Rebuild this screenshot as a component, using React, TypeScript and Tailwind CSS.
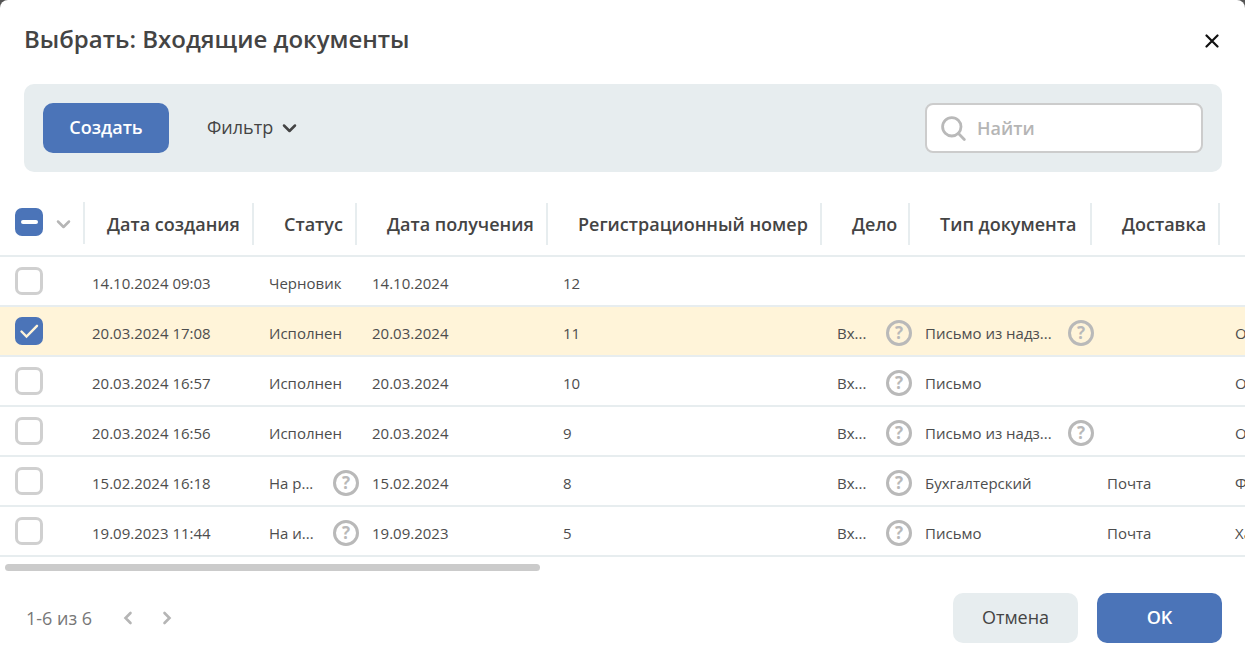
import { useEffect, useRef, useState } from "react";

type Cell = { text: string; hint?: boolean };
type Row = { id: number; cells: Cell[] };

const columns = [
  { title: "Дата создания", width: "w-[169px]" },
  { title: "Статус", width: "w-[103px]" },
  { title: "Дата получения", width: "w-[191px]" },
  { title: "Регистрационный номер", width: "w-[274px]" },
  { title: "Дело", width: "w-[88px]" },
  { title: "Тип документа", width: "w-[182px]" },
  { title: "Доставка", width: "w-[128px]" },
  { title: "", width: "" },
];

const t = (text: string): Cell => ({ text });
const h = (text: string): Cell => ({ text, hint: true });

const rows: Row[] = [
  { id: 12, cells: [t("14.10.2024 09:03"), t("Черновик"), t("14.10.2024"), t("12"), t(""), t(""), t(""), t("")] },
  { id: 11, cells: [t("20.03.2024 17:08"), t("Исполнен"), t("20.03.2024"), t("11"), h("Вх..."), h("Письмо из надз..."), t(""), t("О")] },
  { id: 10, cells: [t("20.03.2024 16:57"), t("Исполнен"), t("20.03.2024"), t("10"), h("Вх..."), t("Письмо"), t(""), t("О")] },
  { id: 9, cells: [t("20.03.2024 16:56"), t("Исполнен"), t("20.03.2024"), t("9"), h("Вх..."), h("Письмо из надз..."), t(""), t("О")] },
  { id: 8, cells: [t("15.02.2024 16:18"), h("На р..."), t("15.02.2024"), t("8"), h("Вх..."), t("Бухгалтерский"), t("Почта"), t("Ф")] },
  { id: 5, cells: [t("19.09.2023 11:44"), h("На и..."), t("19.09.2023"), t("5"), h("Вх..."), t("Письмо"), t("Почта"), t("Ха")] },
];

function Chevron() {
  return (
    <svg viewBox="0 0 15 10" className="h-[10px] w-[15px]" fill="none" stroke="currentColor" strokeWidth="2.5" strokeLinecap="round" strokeLinejoin="round" aria-hidden="true">
      <path d="M2 2.5 7.5 8 13 2.5" />
    </svg>
  );
}

function PageArrow({ d }: { d: string }) {
  return (
    <svg viewBox="0 0 10 14" className="h-[14px] w-[10px]" fill="none" stroke="currentColor" strokeWidth="2.6" strokeLinecap="round" aria-hidden="true">
      <path d={d} />
    </svg>
  );
}

function Tick({ label, checked, mixed = false, onChange }: { label: string; checked: boolean; mixed?: boolean; onChange: () => void }) {
  const ref = useRef<HTMLInputElement>(null);
  useEffect(() => {
    if (ref.current) ref.current.indeterminate = mixed;
  }, [mixed]);
  return (
    <div className="relative size-7 shrink-0">
      <input
        ref={ref}
        type="checkbox"
        aria-label={label}
        checked={checked}
        onChange={onChange}
        className="block size-7 appearance-none rounded-[7px] border-3 border-[#d0d0d0] bg-white checked:border-[#4b74b8] checked:bg-[#4b74b8] indeterminate:border-[#4b74b8] indeterminate:bg-[#4b74b8]"
      />
      {(checked || mixed) && (
        <svg viewBox="0 0 28 28" className="pointer-events-none absolute inset-0 size-7" fill="none" strokeLinecap="round" aria-hidden="true">
          {mixed ? (
            <path d="M8 14H21" stroke="#fff" strokeWidth="4" />
          ) : (
            <path d="M6.5 14.5 11.5 19.5 22 8.8" stroke="#fff4d9" strokeWidth="2.4" />
          )}
        </svg>
      )}
    </div>
  );
}

export default function App() {
  const [selected, setSelected] = useState<number[]>([11]);
  const all = selected.length === rows.length;
  const toggle = (id: number) =>
    setSelected((s) => (s.includes(id) ? s.filter((x) => x !== id) : [...s, id]));

  return (
    <div className="min-h-screen bg-[#555555] font-['Open_Sans',sans-serif] text-[#444444]">
      <main className="flex min-h-screen flex-col overflow-hidden rounded-t-lg bg-white">
        <header className="flex h-[84px] items-start justify-between pt-[23px] pr-[21px] pl-6">
          <h1 className="text-2xl font-semibold leading-8">Выбрать: Входящие документы</h1>
          <button type="button" aria-label="Закрыть" className="mt-1.5 flex size-6 items-center justify-center text-[#111111]">
            <svg viewBox="0 0 14 14" className="size-[14px]" fill="none" stroke="currentColor" strokeWidth="2.2" strokeLinecap="round" aria-hidden="true">
              <path d="M1.5 1.5 12.5 12.5M12.5 1.5 1.5 12.5" />
            </svg>
          </button>
        </header>

        <section className="mr-[23px] ml-6 flex items-center justify-between rounded-[10px] bg-[#e7edef] p-[19px]">
          <div className="flex items-center">
            <button type="button" className="h-[50px] w-[126px] rounded-[10px] bg-[#4b74b8] pb-0.5 text-lg font-semibold text-white">
              Создать
            </button>
            <button type="button" className="ml-[38px] flex h-[50px] items-center gap-[9px] text-lg font-medium">
              <span className="pb-0.5">Фильтр</span>
              <Chevron />
            </button>
          </div>
          <div className="flex h-[50px] w-[278px] items-center gap-[10px] rounded-lg border-2 border-[#cccccc] bg-white pr-3 pl-[14px]">
            <svg viewBox="0 0 26 26" className="size-[26px] shrink-0" fill="none" stroke="#b9b9b9" strokeWidth="2.8" strokeLinecap="round" aria-hidden="true">
              <circle cx="10.8" cy="11.8" r="9.2" />
              <path d="M17.5 18.6 23.3 24.4" />
            </svg>
            <input type="search" aria-label="Найти" placeholder="Найти" className="h-9 min-w-0 flex-1 text-lg font-semibold outline-none placeholder:text-[#b5b5b5]" />
          </div>
        </section>

        <div className="mt-[30px] overflow-x-auto overflow-y-hidden [scrollbar-width:none]">
          <table className="w-[2850px] table-fixed border-collapse">
            <thead>
              <tr className="h-[54px] border-b-2 border-[#e7edef] align-top">
                <th className="w-[85px] p-0">
                  <div className="flex h-[42px] items-center gap-[13px] border-r-2 border-[#e7edef] pb-0.5 pl-[15px]">
                    <Tick
                      label="Выбрать все"
                      checked={all}
                      mixed={selected.length > 0 && !all}
                      onChange={() => setSelected(all ? [] : rows.map((r) => r.id))}
                    />
                    <button type="button" aria-label="Параметры выбора" className="pt-1 text-[#b5b5b5]">
                      <Chevron />
                    </button>
                  </div>
                </th>
                {columns.map((c, i) => (
                  <th key={i} className={`${c.width} p-0 pt-px text-left text-lg font-semibold whitespace-nowrap`}>
                    {c.title && (
                      <div className={`flex h-[42px] items-center border-r-2 border-[#e7edef] ${i === 0 ? "pl-[22px]" : "pl-[30px]"}`}>
                        {c.title}
                      </div>
                    )}
                  </th>
                ))}
              </tr>
            </thead>
            <tbody>
              {rows.map((r) => {
                const on = selected.includes(r.id);
                return (
                  <tr key={r.id} className={`h-[50px] border-b-2 border-[#e7edef] ${on ? "bg-[#fff4d9]" : ""}`}>
                    <td className="p-0 pl-[15px]">
                      <Tick label={`Документ ${r.id}`} checked={on} onChange={() => toggle(r.id)} />
                    </td>
                    {r.cells.map((c, i) => (
                      <td key={i} className={`p-0 pt-1 text-[15px] whitespace-nowrap text-[#4d4d4d] ${i === 0 ? "pl-[7px]" : "pl-[15px]"}`}>
                        <div className="-mr-0.5 flex h-[26px] items-center justify-between">
                          {c.text}
                          {c.hint && (
                            <button type="button" aria-label="Подсказка" className="size-[26px] shrink-0 rounded-full border-3 border-[#b9b9b9] text-[17px] leading-5 font-bold text-[#b9b9b9]">
                              ?
                            </button>
                          )}
                        </div>
                      </td>
                    ))}
                  </tr>
                );
              })}
            </tbody>
          </table>
        </div>
        <div className="mt-[7px] px-[5px]">
          <div className="h-[7px] w-[43.3%] rounded-full bg-[#cbcbcb]" />
        </div>

        <footer className="mt-[22px] flex items-center justify-between pr-[23px] pl-[26px]">
          <nav aria-label="Страницы" className="flex items-center text-[#777777]">
            <span className="text-lg font-medium">1-6 из 6</span>
            <button type="button" aria-label="Назад" className="ml-[31px] text-[#b5b5b5]">
              <PageArrow d="M7.5 2 2.5 7 7.5 12" />
            </button>
            <button type="button" aria-label="Вперёд" className="ml-[29px] text-[#b5b5b5]">
              <PageArrow d="M2.5 2 7.5 7 2.5 12" />
            </button>
          </nav>
          <div className="flex gap-[19px] text-lg">
            <button type="button" className="h-[50px] w-[125px] rounded-[10px] bg-[#e7edef] pb-0.5 font-medium">
              Отмена
            </button>
            <button type="button" className="h-[50px] w-[125px] rounded-[10px] bg-[#4b74b8] pb-0.5 font-semibold text-white">
              OK
            </button>
          </div>
        </footer>
      </main>
    </div>
  );
}
